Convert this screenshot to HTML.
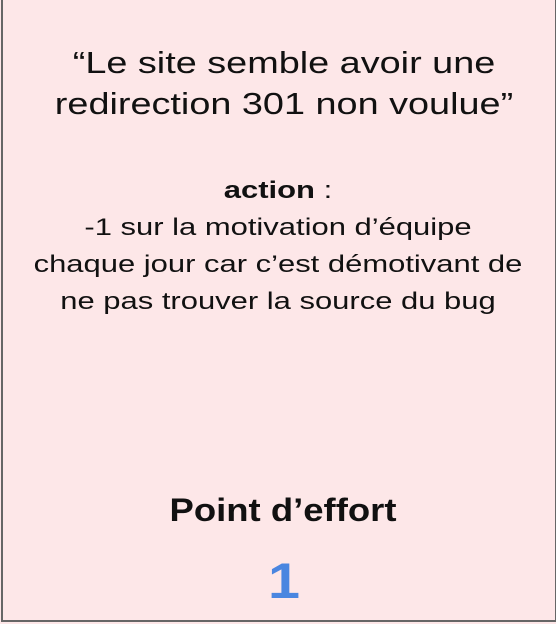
<!DOCTYPE html>
<html><head><style>
html,body{margin:0;padding:0;width:556px;height:624px;background:#fde7e8;overflow:hidden}
body{position:relative;font-family:"Liberation Sans",sans-serif;color:#111}
.b{position:absolute;left:0;top:0;width:552px;height:620px;border-left:2px solid #666;border-right:2px solid #666;border-bottom:2px solid #666;margin-left:1px}
.t{position:absolute;left:0;width:556px;text-align:center}
</style></head><body>
<div class="b"></div>
<div class="t" style="left:6px;top:42px;font-size:31px;line-height:41px;transform:scaleX(1.22)">“Le site semble avoir une<br>redirection 301 non voulue”</div>
<div class="t" style="top:172px;font-size:24px;line-height:37px;transform:scaleX(1.29)"><b>action</b> :<br>-1 sur la motivation d’équipe<br>chaque jour car c’est démotivant de<br>ne pas trouver la source du bug</div>
<div class="t" style="left:5px;top:490px;font-size:32px;font-weight:bold;line-height:40px;transform:scaleX(1.14)">Point d’effort</div>
<div class="t" style="left:6px;top:552px;font-size:50px;font-weight:bold;line-height:58px;color:#4a86e0;transform:scaleX(1.15)">1</div>
</body></html>
